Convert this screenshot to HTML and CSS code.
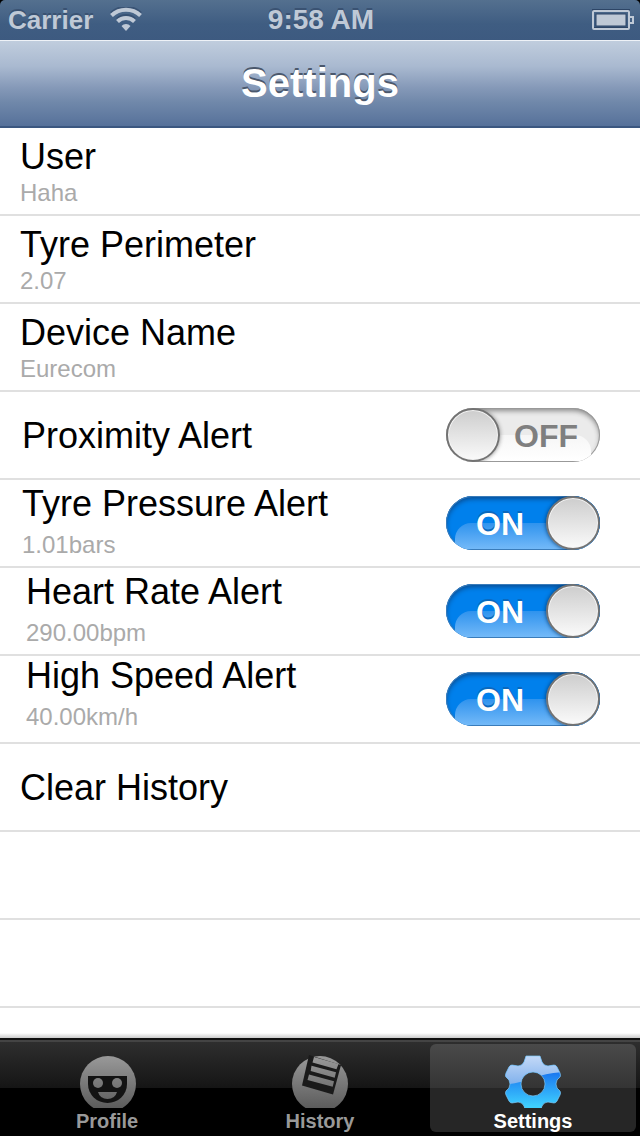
FILE: index.html
```html
<!DOCTYPE html>
<html lang="en">
<head>
    <meta charset="UTF-8">
    <meta name="viewport" content="width=device-width, initial-scale=1.0">
    <title>Settings</title>
    <link rel="stylesheet" href="styles.css">
</head>
<body>
    <div class="status-bar">
        <div class="status-left">
            <span class="carrier">Carrier</span>
            <svg class="wifi" width="34" height="26" viewBox="0 0 34 26">
                <g fill="none" stroke="#2d4566" stroke-opacity=".6" stroke-width="4" transform="translate(0 -2)">
                    <path d="M2.500 8.500a21 21 0 0 1 29 0"/>
                    <path d="M8.500 14.500a12 12 0 0 1 17 0"/>
                </g>
                <g fill="none" stroke="#bfc9d6" stroke-width="4">
                    <path d="M2.500 8.500a21 21 0 0 1 29 0"/>
                    <path d="M8.500 14.500a12 12 0 0 1 17 0"/>
                </g>
                <path d="M12.500 19a6 6 0 0 1 9 0L17 24z" fill="#bfc9d6"/>
            </svg>
        </div>
        <div class="clock">9:58 AM</div>
        <div class="status-right">
            <svg width="42" height="22" viewBox="0 0 42 22">
                <path d="M1 1h36v18H1z" fill="none" stroke="#2d4566" stroke-width="2"/>
                <rect x="1" y="2" width="36" height="18" rx="1" fill="none" stroke="#bfc9d6" stroke-width="2"/>
                <rect x="4" y="5" width="30" height="12" fill="#bfc9d6" stroke="#2d4566" stroke-width="1"/>
                <path d="M38 8h3v6h-3" fill="none" stroke="#bfc9d6" stroke-width="2"/>
            </svg>
        </div>
    </div>

    <header class="nav-bar">
        <h1>Settings</h1>
    </header>

    <main class="list">
        <div class="row">
            <div class="cell">
                <div class="title">User</div>
                <div class="detail">Haha</div>
            </div>
        </div>
        <div class="row">
            <div class="cell">
                <div class="title">Tyre Perimeter</div>
                <div class="detail">2.07</div>
            </div>
        </div>
        <div class="row">
            <div class="cell">
                <div class="title">Device Name</div>
                <div class="detail">Eurecom</div>
            </div>
        </div>
        <label class="row center indent">
            <span class="cell">
                <span class="title">Proximity Alert</span>
            </span>
            <span class="switch">
                <input type="checkbox">
                <span class="switch-text off">OFF</span>
            </span>
        </label>
        <label class="row alert indent">
            <span class="cell">
                <span class="title">Tyre Pressure Alert</span>
                <span class="detail">1.01bars</span>
            </span>
            <span class="switch">
                <input type="checkbox" checked>
                <span class="switch-text on">ON</span>
            </span>
        </label>
        <label class="row alert indent-more">
            <span class="cell">
                <span class="title">Heart Rate Alert</span>
                <span class="detail">290.00bpm</span>
            </span>
            <span class="switch">
                <input type="checkbox" checked>
                <span class="switch-text on">ON</span>
            </span>
        </label>
        <label class="row alert raised indent-more">
            <span class="cell">
                <span class="title">High Speed Alert</span>
                <span class="detail">40.00km/h</span>
            </span>
            <span class="switch">
                <input type="checkbox" checked>
                <span class="switch-text on">ON</span>
            </span>
        </label>
        <div class="row center">
            <div class="cell">
                <div class="title">Clear History</div>
            </div>
        </div>
        <div class="row"></div>
        <div class="row"></div>
        <div class="rest"></div>
    </main>

    <nav class="tab-bar">
        <button type="button" class="tab">
            <svg width="60" height="54" viewBox="0 0 60 54">
                <defs>
                    <linearGradient id="gray" gradientUnits="userSpaceOnUse" x1="0" y1="2" x2="0" y2="54">
                        <stop offset="0" stop-color="#999"/>
                        <stop offset="1" stop-color="#5c5c5c"/>
                    </linearGradient>
                </defs>
                <circle cx="31" cy="30" r="28" fill="url(#gray)"/>
                <path d="M11 22h39v8a19.500 19 0 0 1-39 0z" fill="#131313"/>
                <circle cx="21" cy="29" r="5" fill="url(#gray)"/>
                <circle cx="40" cy="29" r="5" fill="url(#gray)"/>
                <path d="M21 38h19q-2 7-9.500 7T21 38z" fill="url(#gray)"/>
            </svg>
            <span>Profile</span>
        </button>
        <button type="button" class="tab">
            <svg width="60" height="54" viewBox="0 0 60 54">
                <circle cx="30" cy="30" r="28" fill="url(#gray)"/>
                <path d="M19 1l32 10-8 29.500L12 31.500z" fill="#1a1a1a"/>
                <path d="M24 3l24.500 7-2 5.200L22.500 8.500zM21.500 11.700l24.500 6.600-1.300 5.400-24-6.700zM19 20.500l25 6.800-1.300 5.400L17.500 26z" fill="url(#gray)"/>
            </svg>
            <span>History</span>
        </button>
        <button type="button" class="tab active">
            <svg width="60" height="54" viewBox="0 0 60 54">
                <defs>
                    <linearGradient id="blue" x1="0" y1="0" x2="0" y2="1">
                        <stop offset="0.300" stop-color="#1a78f0"/>
                        <stop offset="0.900" stop-color="#3fd0ff"/>
                    </linearGradient>
                    <linearGradient id="gloss" x1="0" y1="0" x2="0" y2="1">
                        <stop offset="0" stop-color="#c8dcf8"/>
                        <stop offset="1" stop-color="#7fb0ec"/>
                    </linearGradient>
                    <path id="gear" fill-rule="evenodd" clip-rule="evenodd" d="M23 2H37L39 8Q41 12 45 12L51 11Q53 11 54 13L57 19Q58 22 57 23L54 26Q52 30 54 34L57 37Q58 39 57 41L54 47Q53 49 51 49L45 48Q41 48 39 52L37 58H23L21 52Q19 48 15 48L9 49Q7 49 6 47L3 41Q2 39 3 37L6 34Q8 30 6 26L3 23Q2 22 3 19L6 13Q7 11 9 11L15 12Q19 12 21 8ZM30 18a12 12 0 1 0 0 24 12 12 0 0 0 0-24z"/>
                    <clipPath id="gear-clip"><use href="#gear"/></clipPath>
                </defs>
                <use href="#gear" fill="url(#blue)"/>
                <path d="M0 0h60v18Q43 19 30 24T0 31z" fill="url(#gloss)" clip-path="url(#gear-clip)"/>
                <use href="#gear" fill="none" stroke="#7cc8f8" stroke-opacity=".7"/>
            </svg>
            <span>Settings</span>
        </button>
    </nav>
</body>
</html>
```
FILE: styles.css
```css
*,
*::before,
*::after {
    box-sizing: border-box;
}
body {
    margin: 0;
    min-height: 100vh;
    display: flex;
    flex-direction: column;
    background: #000;
    font-family: "Liberation Sans", Helvetica, Arial, sans-serif;
}

/* status bar */
.status-bar {
    height: 40px;
    padding: 0 6px 0 8px;
    display: grid;
    grid-template-columns: 1fr auto 1fr;
    align-items: center;
    background: linear-gradient(#54708f, #3f5d82 60%, #3d5a80);
    border-radius: 5px 5px 0 0;
    color: #bfc9d6;
    font-weight: bold;
    text-shadow: 0 -2px 0 #3a5272;
}
.status-left {
    display: flex;
    align-items: center;
    gap: 16px;
}
.carrier {
    font-size: 26px;
}
.clock {
    font-size: 28px;
}
.status-right {
    display: flex;
    justify-content: flex-end;
}

/* navigation bar */
.nav-bar {
    height: 88px;
    border-top: 1px solid #eef2f7;
    border-bottom: 2px solid #3b5780;
    background: linear-gradient(#c0cddd, #a9b9d0 30%, #8599b8 55%, #7088aa 72%, #56719a);
}
.nav-bar h1 {
    margin: 0;
    font-size: 40px;
    line-height: 84px;
    text-align: center;
    color: #fff;
    text-shadow: 0 -2px 0 #4b586c;
}

/* list */
.list {
    flex: 1;
    display: flex;
    flex-direction: column;
    background: #fff;
}
.row {
    display: flex;
    justify-content: space-between;
    height: 88px;
    padding: 7px 40px 0 20px;
    border-bottom: 2px solid #e0e0e0;
}
.row.center {
    align-items: center;
    padding-top: 0;
}
.center .cell {
    padding-top: 2px;
}
.row.alert {
    padding-top: 2px;
}
.row.indent {
    padding-left: 22px;
}
.row.indent-more {
    padding-left: 26px;
}
.cell {
    display: flex;
    flex-direction: column;
}
.alert .cell {
    gap: 5px;
}
.row.raised {
    padding-top: 0;
}
.raised .title {
    margin-top: -2px;
}
.title {
    font-size: 36px;
    line-height: 44px;
    color: #000;
}
.detail {
    font-size: 24px;
    line-height: 28px;
    color: #aaa;
}
.rest {
    flex: 1;
    min-height: 30px;
    background: linear-gradient(to top, #ccc, #fff 5px);
}

/* switch */
.switch {
    position: relative;
    width: 154px;
    height: 54px;
}
.alert .switch {
    align-self: center;
    margin-top: -2px;
}
.raised .switch {
    margin-top: 0;
}
.switch input {
    appearance: none;
    display: block;
    position: relative;
    width: 100%;
    height: 100%;
    margin: 0;
    border-radius: 27px;
    background: #ebebeb;
    box-shadow: inset 0 0 0 1px #999, inset 0 3px 5px #8b8b8b;
    overflow: hidden;
}
.switch input::before {
    content: "";
    position: absolute;
    left: 9px;
    right: 9px;
    top: 27px;
    bottom: 1px;
    border-radius: 16px 16px 0 0;
    background: linear-gradient(#f6f6f6, #fff);
}
.switch input::after {
    content: "";
    position: absolute;
    left: 0;
    top: 0;
    width: 54px;
    height: 54px;
    border: 2px solid #737373;
    border-radius: 50%;
    background: linear-gradient(#cdcdcd, #fafafa);
    box-shadow: inset 0 0 0 1px #f4f4f4, 0 0 4px #888;
}
.switch input:checked {
    background: #0080ec;
    box-shadow: inset 0 0 0 1px #3a7cba, inset 0 3px 5px #0a4c90;
}
.switch input:checked::before {
    background: linear-gradient(#2f93ee, #73b9f8);
}
.switch input:checked::after {
    left: auto;
    right: 0;
    box-shadow: inset 0 0 0 1px #f4f4f4, 0 0 4px #03386d;
}
.switch-text {
    position: absolute;
    top: 0;
    font-size: 32px;
    line-height: 56px;
    font-weight: bold;
}
.switch-text.on {
    left: 30px;
    color: #fff;
    text-shadow: 0 -2px 0 #0b68bd;
}
.switch-text.off {
    right: 22px;
    color: #7f7f7f;
}

/* tab bar */
.tab-bar {
    height: 98px;
    padding: 2px 4px 4px;
    display: flex;
    gap: 7px;
    border-top: 2px solid #111;
    background: linear-gradient(#444 2px, #2e2e2e 2px, #151515 48px, #000 48px);
}
.tab {
    flex: 1;
    display: flex;
    flex-direction: column;
    align-items: center;
    margin: 2px 0 0;
    padding: 10px 0 0;
    border: 0;
    border-radius: 6px;
    background: none;
    font-family: inherit;
    font-size: 20px;
    line-height: 26px;
    font-weight: bold;
    color: #999;
}
.tab svg {
    flex: none;
}
.tab.active {
    background: linear-gradient(#4a4a4a, #343434 44px, #262626 44px);
    color: #fff;
}
```
